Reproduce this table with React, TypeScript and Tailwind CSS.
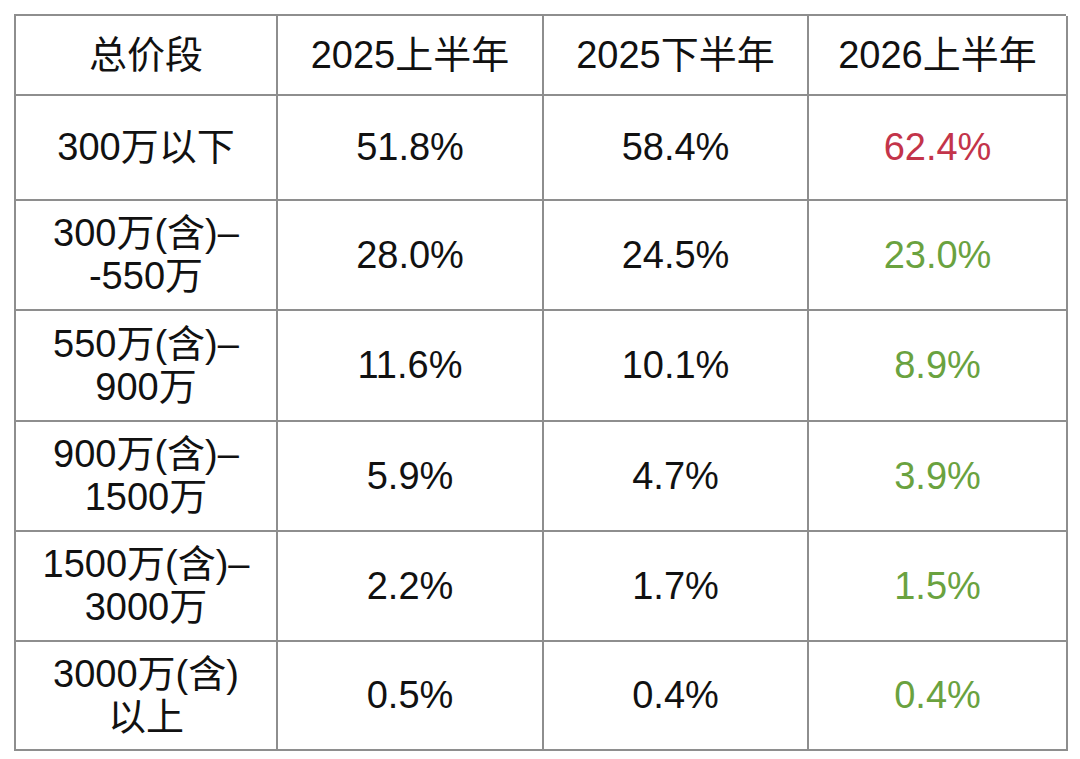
import React from "react";

const header = ["总价段", "2025上半年", "2025下半年", "2026上半年"];

const rows: { label: string[]; a: string; b: string; c: string; cColor: string }[] = [
  { label: ["300万以下"], a: "51.8%", b: "58.4%", c: "62.4%", cColor: "text-[#c3344a]" },
  { label: ["300万(含)–", "-550万"], a: "28.0%", b: "24.5%", c: "23.0%", cColor: "text-[#6aa23f]" },
  { label: ["550万(含)–", "900万"], a: "11.6%", b: "10.1%", c: "8.9%", cColor: "text-[#6aa23f]" },
  { label: ["900万(含)–", "1500万"], a: "5.9%", b: "4.7%", c: "3.9%", cColor: "text-[#6aa23f]" },
  { label: ["1500万(含)–", "3000万"], a: "2.2%", b: "1.7%", c: "1.5%", cColor: "text-[#6aa23f]" },
  { label: ["3000万(含)", "以上"], a: "0.5%", b: "0.4%", c: "0.4%", cColor: "text-[#6aa23f]" },
];

const rowHeights = ["h-[105px]", "h-[110px]", "h-[111px]", "h-[110px]", "h-[110px]", "h-[109px]"];

function CellBox({ lines, className = "" }: { lines: string[]; className?: string }) {
  return (
    <div
      className={`flex flex-col items-center justify-center border-r-2 border-b-2 border-[#8e8e8e] text-center leading-[43px] ${className}`}
    >
      {lines.map((l, i) => (
        <span key={i} className="whitespace-nowrap">
          {l}
        </span>
      ))}
    </div>
  );
}

export default function App() {
  return (
    <div className="min-h-[759px] w-[1080px] bg-white pl-[14px] pt-[14px]">
      <div
        className="grid w-[1052px] grid-cols-[262px_266px_265px_259px] border-l-2 border-t-2 border-[#8e8e8e] text-[38px] text-[#111]"
        style={{ fontFamily: '"Liberation Sans", "Noto Sans CJK SC", sans-serif' }}
      >
        {header.map((h, i) => (
          <CellBox key={i} lines={[h]} className="h-[80px]" />
        ))}
        {rows.map((r, i) => (
          <React.Fragment key={i}>
            <CellBox lines={r.label} className={rowHeights[i]} />
            <CellBox lines={[r.a]} className={rowHeights[i]} />
            <CellBox lines={[r.b]} className={rowHeights[i]} />
            <CellBox lines={[r.c]} className={`${rowHeights[i]} ${r.cColor}`} />
          </React.Fragment>
        ))}
      </div>
    </div>
  );
}
